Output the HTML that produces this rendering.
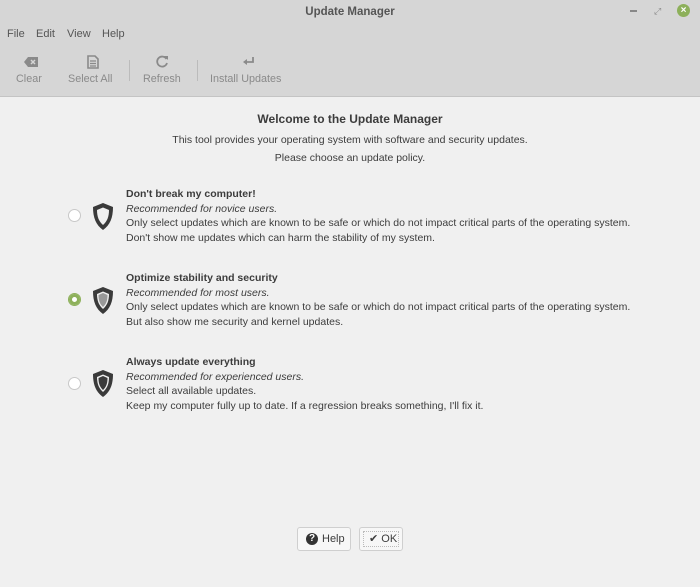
<!DOCTYPE html><html><head><style>
body{margin:0;width:700px;height:587px;background:#f0f0f0;font-family:"Liberation Sans","DejaVu Sans",sans-serif;font-size:10.5px;color:#3c3c3c;position:relative;overflow:hidden}
.a{position:absolute;white-space:nowrap}
#top{position:absolute;left:0;top:0;width:700px;height:96px;background:#d6d6d6;border-bottom:1px solid #c4c4c4}
.tb{color:#8a8a8a;font-size:10.8px}
.b{font-weight:bold}
.i{font-style:italic}
.radio{position:absolute;width:11px;height:11px;border-radius:50%;background:#fff;border:1px solid #c8c8c8}
.btn{position:absolute;height:22px;border:1px solid #cfcfcf;border-radius:3px;background:#f7f7f7;font-size:11px;line-height:22px}
</style></head><body>
<div id="top"></div>
<div class="a b" style="left:0;width:700px;text-align:center;top:6px;font-size:11.5px;color:#555">Update Manager</div>
<div class="a" style="left:630px;top:10px;width:7px;height:2px;background:#888"></div>
<div class="a" style="left:654px;top:6px;font-size:9px;color:#888">⤢</div>
<div class="a" style="left:677px;top:4px;width:13px;height:13px;border-radius:50%;background:#8db05a;color:#fff;font-size:10px;line-height:13px;text-align:center;font-weight:bold">×</div>
<div class="a" style="left:7px;top:28px;color:#555;font-size:11px">File</div>
<div class="a" style="left:36px;top:28px;color:#555;font-size:11px">Edit</div>
<div class="a" style="left:67px;top:28px;color:#555;font-size:11px">View</div>
<div class="a" style="left:102px;top:28px;color:#555;font-size:11px">Help</div>
<svg class="a" style="left:24px;top:56px" width="16" height="12"><path d="M4 1H14V11H4L0 6Z" fill="#8a8a8a"/><path d="M7 4L11 8M11 4L7 8" stroke="#d6d6d6" stroke-width="1.5"/></svg>
<svg class="a" style="left:87px;top:55px" width="12" height="14"><path d="M1 1H8L11 4V13H1Z" fill="none" stroke="#8a8a8a" stroke-width="1.6"/><path d="M3 6H9M3 8.5H9M3 11H9" stroke="#8a8a8a" stroke-width="1.2"/></svg>
<svg class="a" style="left:156px;top:55px" width="13" height="13"><path d="M10.5 4A5 5 0 1 0 11 8" fill="none" stroke="#8a8a8a" stroke-width="1.8"/><path d="M8 1H12V5Z" fill="#8a8a8a"/></svg>
<svg class="a" style="left:243px;top:57px" width="12" height="11"><path d="M10 0V5H2" fill="none" stroke="#8a8a8a" stroke-width="1.8"/><path d="M0 5L4 2V8Z" fill="#8a8a8a"/></svg>
<div class="a tb" style="left:16px;top:73px">Clear</div>
<div class="a tb" style="left:68px;top:73px">Select All</div>
<div class="a" style="left:129px;top:60px;width:1px;height:21px;background:#bbb"></div>
<div class="a tb" style="left:143px;top:73px">Refresh</div>
<div class="a" style="left:197px;top:60px;width:1px;height:21px;background:#bbb"></div>
<div class="a tb" style="left:210px;top:73px">Install Updates</div>

<div class="a b" style="left:0;width:700px;text-align:center;top:112px;font-size:12px">Welcome to the Update Manager</div>
<div class="a" style="left:0;width:700px;text-align:center;top:134px">This tool provides your operating system with software and security updates.</div>
<div class="a" style="left:0;width:700px;text-align:center;top:152px">Please choose an update policy.</div>

<div class="radio" style="left:68px;top:209px"></div>
<svg class="a" style="left:92px;top:203px" width="22" height="27"><path d="M11 0L21 4C21 15 18 22 11 27C4 22 1 15 1 4Z" fill="#3a3a3a"/><path d="M11 4.5L17 7C17 14 15 18.5 11 22C7 18.5 5 14 5 7Z" fill="#f0f0f0"/></svg>
<div class="a b" style="left:126px;top:188px">Don't break my computer!</div>
<div class="a i" style="left:126px;top:203px">Recommended for novice users.</div>
<div class="a" style="left:126px;top:217px">Only select updates which are known to be safe or which do not impact critical parts of the operating system.</div>
<div class="a" style="left:126px;top:232px">Don't show me updates which can harm the stability of my system.</div>

<div class="radio" style="left:68px;top:293px;background:#fff;border-color:#8db05a;box-shadow:inset 0 0 0 3px #8db05a"></div>
<svg class="a" style="left:92px;top:287px" width="22" height="27"><path d="M11 0L21 4C21 15 18 22 11 27C4 22 1 15 1 4Z" fill="#3a3a3a"/><path d="M11 4.5L17 7C17 14 15 18.5 11 22C7 18.5 5 14 5 7Z" fill="#f0f0f0"/><path d="M11 6L15.5 8C15.5 14 14 17 11 20C8 17 6.5 14 6.5 8Z" fill="#999"/></svg>
<div class="a b" style="left:126px;top:272px">Optimize stability and security</div>
<div class="a i" style="left:126px;top:287px">Recommended for most users.</div>
<div class="a" style="left:126px;top:301px">Only select updates which are known to be safe or which do not impact critical parts of the operating system.</div>
<div class="a" style="left:126px;top:316px">But also show me security and kernel updates.</div>

<div class="radio" style="left:68px;top:377px"></div>
<svg class="a" style="left:92px;top:370px" width="22" height="27"><path d="M11 0L21 4C21 15 18 22 11 27C4 22 1 15 1 4Z" fill="#3a3a3a"/><path d="M11 4.5L17 7C17 14 15 18.5 11 22C7 18.5 5 14 5 7Z" fill="#f0f0f0"/><path d="M11 6L15.5 8C15.5 14 14 17 11 20C8 17 6.5 14 6.5 8Z" fill="#3a3a3a"/></svg>
<div class="a b" style="left:126px;top:356px">Always update everything</div>
<div class="a i" style="left:126px;top:371px">Recommended for experienced users.</div>
<div class="a" style="left:126px;top:385px">Select all available updates.</div>
<div class="a" style="left:126px;top:400px">Keep my computer fully up to date. If a regression breaks something, I'll fix it.</div>

<div class="btn" style="left:297px;top:527px;width:52px"><span style="position:absolute;left:8px;top:5px;width:12px;height:12px;border-radius:50%;background:#333;color:#fff;font-size:10px;line-height:12px;text-align:center;font-weight:bold">?</span><span style="position:absolute;left:24px">Help</span></div>
<div class="btn" style="left:359px;top:527px;width:42px"><span style="position:absolute;left:3px;top:3px;right:3px;bottom:3px;border:1px dotted #bbb"></span><span style="position:absolute;left:9px">✔ OK</span></div>
</body></html>
